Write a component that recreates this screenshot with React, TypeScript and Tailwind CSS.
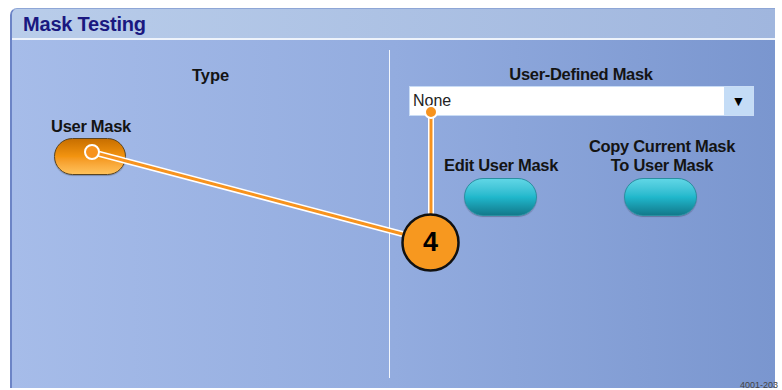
import React from 'react';

const font = { fontFamily: '"Liberation Sans", Arial, sans-serif' };

const OrangePill = () => (
  <div className="w-[72px] h-[37px] rounded-full border border-[#5a4420] bg-linear-to-b from-[#c86f00] via-[#f39410] to-[#ffc25a] shadow-[0_1px_1px_rgba(0,0,0,0.25)]" />
);

const TealPill = () => (
  <div className="w-[73px] h-[38px] rounded-full border border-[#2a8fa0] bg-linear-to-b from-[#5fd6e6] via-[#20b8cc] to-[#127a8c] shadow-[0_1px_1px_rgba(0,0,0,0.25)]" />
);

export default function App() {
  return (
    <div className="relative w-[782px] h-[390px] bg-white overflow-hidden" style={font}>
      <div className="absolute left-[10px] top-[8px] w-[765px] h-[380px] rounded-tl-[7px] border-l-2 border-t border-[#6c84c6] border-t-[#8ea6d6] flex flex-col overflow-hidden bg-linear-to-r from-[#a6bce9] via-[#93acdf] to-[#7a96cf]">
        {/* title bar */}
        <div className="h-[29px] shrink-0 flex items-center pl-[11px] bg-linear-to-r from-[#b9cdea] to-[#a0b6de]">
          <span className="text-[20px] font-bold text-[#1a1880] leading-none tracking-[-0.2px]">Mask Testing</span>
        </div>
        <div className="h-[2px] shrink-0 bg-[#eef3fb]" />

        {/* body */}
        <div className="flex flex-1">
          {/* Type column */}
          <div className="w-[377px] flex flex-col pt-[26px]">
            <div className="ml-[180px] text-[16.5px] font-bold text-[#141414] leading-[19px]">Type</div>
            <div className="ml-[38px] mt-[32px] flex flex-col items-center w-[82px]">
              <span className="text-[16.5px] font-bold text-[#141414] leading-[19px] whitespace-nowrap tracking-[-0.3px]">User Mask</span>
              <div className="mt-[2px] ml-[-2px]">
                <OrangePill />
              </div>
            </div>
          </div>

          {/* divider */}
          <div className="w-px bg-[#f2f6fd] mt-[10px] mb-[10px]" />

          {/* User-defined column */}
          <div className="flex-1 flex flex-col pt-[25px] pl-[19px]">
            <div className="w-[344px] text-center text-[16.5px] font-bold text-[#141414] leading-[19px] tracking-[-0.3px]">User-Defined Mask</div>
            <div className="mt-[2px] w-[345px] h-[30px] flex border border-[#c9dcf5] bg-white">
              <div className="flex-1 flex items-center pl-[3px] text-[16px] text-[#222]">None</div>
              <div className="w-[29px] bg-[#c4dcf6] flex items-center justify-center text-[14px] text-black">▼</div>
            </div>
            <div className="flex mt-[21px]">
              <div className="w-[200px] flex flex-col items-center pr-[16px] pt-[19px]">
                <span className="text-[16.5px] font-bold text-[#141414] leading-[19px] whitespace-nowrap tracking-[-0.3px]">Edit User Mask</span>
                <div className="mt-[3px] ml-[-2px]">
                  <TealPill />
                </div>
              </div>
              <div className="flex flex-col items-center w-[150px] ml-[-22px]">
                <span className="text-[16.5px] font-bold text-[#141414] leading-[19px] text-center whitespace-nowrap tracking-[-0.3px]">
                  Copy Current Mask
                  <br />
                  To User Mask
                </span>
                <div className="mt-[3px] ml-[-4px]">
                  <TealPill />
                </div>
              </div>
            </div>
          </div>
        </div>
      </div>

      {/* callout overlay */}
      <svg className="absolute left-0 top-0" width="782" height="390" viewBox="0 0 782 390">
        <line x1="92" y1="152" x2="410" y2="236" stroke="#ffffff" strokeWidth="6" />
        <line x1="431" y1="112" x2="431" y2="215" stroke="#ffffff" strokeWidth="6" />
        <line x1="92" y1="152" x2="410" y2="236" stroke="#f7931e" strokeWidth="3" />
        <line x1="431" y1="112" x2="431" y2="215" stroke="#f7931e" strokeWidth="3" />
        <circle cx="92" cy="152" r="7" fill="#f7931e" stroke="#ffffff" strokeWidth="2" />
        <circle cx="431" cy="112" r="6" fill="#f7931e" stroke="#ffffff" strokeWidth="2" />
        <circle cx="430.5" cy="242.5" r="28" fill="#f7981f" stroke="#111111" strokeWidth="2.5" />
      </svg>
      <div className="absolute left-[402px] top-[214px] w-[57px] h-[57px] flex items-center justify-center text-[27px] font-bold text-black leading-none">4</div>

      <div className="absolute left-[740px] top-[380px] text-[9px] text-[#444] leading-[10px] whitespace-nowrap">4001-203</div>
    </div>
  );
}
